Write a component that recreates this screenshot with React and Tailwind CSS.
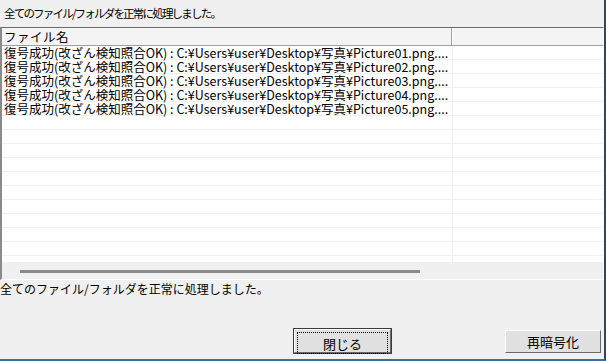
import React from 'react';

const rows = [1, 2, 3, 4, 5].map(
  (n) => `復号成功(改ざん検知照合OK) : C:¥Users¥user¥Desktop¥写真¥Picture0${n}.png....`
);

const emptyRows = Array.from({ length: 11 });

const Button = ({ children, isDefault }) => (
  <div className={'h-full ' + (isDefault ? 'border border-[#3c3c3c]' : '')}>
    <div className="h-full w-full border border-t-white border-l-white border-b-[#696969] border-r-[#696969] bg-[#e1e1e1]">
      <div
        className={
          'flex h-full items-center justify-center pt-[1px] text-[13px] ' +
          (isDefault ? 'm-[2px] h-[calc(100%-4px)] border border-dotted border-black' : '')
        }
      >
        {children}
      </div>
    </div>
  </div>
);

export default function App() {
  return (
    <div className="flex h-[361px] w-[606px] flex-col overflow-hidden border-r-2 border-b-2 border-r-[#33465c] border-b-[#3a6ea5] bg-[#f0f0f0] text-[12px] leading-[14px] text-black [font-family:'Noto_Sans_CJK_JP',sans-serif]">
      <div className="h-[27px] shrink-0 pl-[4px] pt-[6px] text-[11.5px] tracking-[-1.8px]">
        全てのファイル/フォルダを正常に処理しました。
      </div>

      <div className="flex h-[253px] shrink-0 flex-col border-t border-l-2 border-r border-b border-t-[#696969] border-l-[#8a8a8a] border-r-[#f8f8f8] border-b-white">
        <div className="flex h-[18px] shrink-0 border-b border-[#a0a0a0] bg-[#f4f4f4]">
          <div className="w-[450px] border-r border-[#a0a0a0] pl-[2px] pt-[2px] text-[12.5px] tracking-[0.5px]">
            ファイル名
          </div>
          <div className="flex-1 border-l border-white" />
        </div>

        <div className="flex h-[216px] shrink-0 flex-col overflow-hidden bg-white">
          {rows.map((r) => (
            <div key={r} className="flex h-[14px] shrink-0 border-b border-[#f0f0f0]">
              <div className="w-[451px] whitespace-nowrap border-r border-[#f0f0f0] pl-[2px] text-[12.5px] leading-[13px]">
                {r}
              </div>
              <div className="flex-1" />
            </div>
          ))}
          {emptyRows.map((_, i) => (
            <div key={i} className="flex h-[14px] shrink-0 border-b border-[#f0f0f0]">
              <div className="w-[451px] border-r border-[#f0f0f0]" />
              <div className="flex-1" />
            </div>
          ))}
        </div>

        <div className="flex flex-1 items-center bg-[#f0f0f0] pl-[18px]">
          <div className="mt-[1px] h-[3px] w-[400px] bg-[#8a8a8a]" />
        </div>
      </div>

      <div className="flex-1 pt-[2px]">
        <div className="h-[46px]">全てのファイル/フォルダを正常に処理しました。</div>
        <div className="flex h-[26px] items-start pl-[293px]">
          <div className="h-[26px] w-[99px]">
            <Button isDefault>閉じる</Button>
          </div>
          <div className="ml-[113px] mt-[2px] h-[23px] w-[96px]">
            <Button>再暗号化</Button>
          </div>
        </div>
      </div>
    </div>
  );
}
